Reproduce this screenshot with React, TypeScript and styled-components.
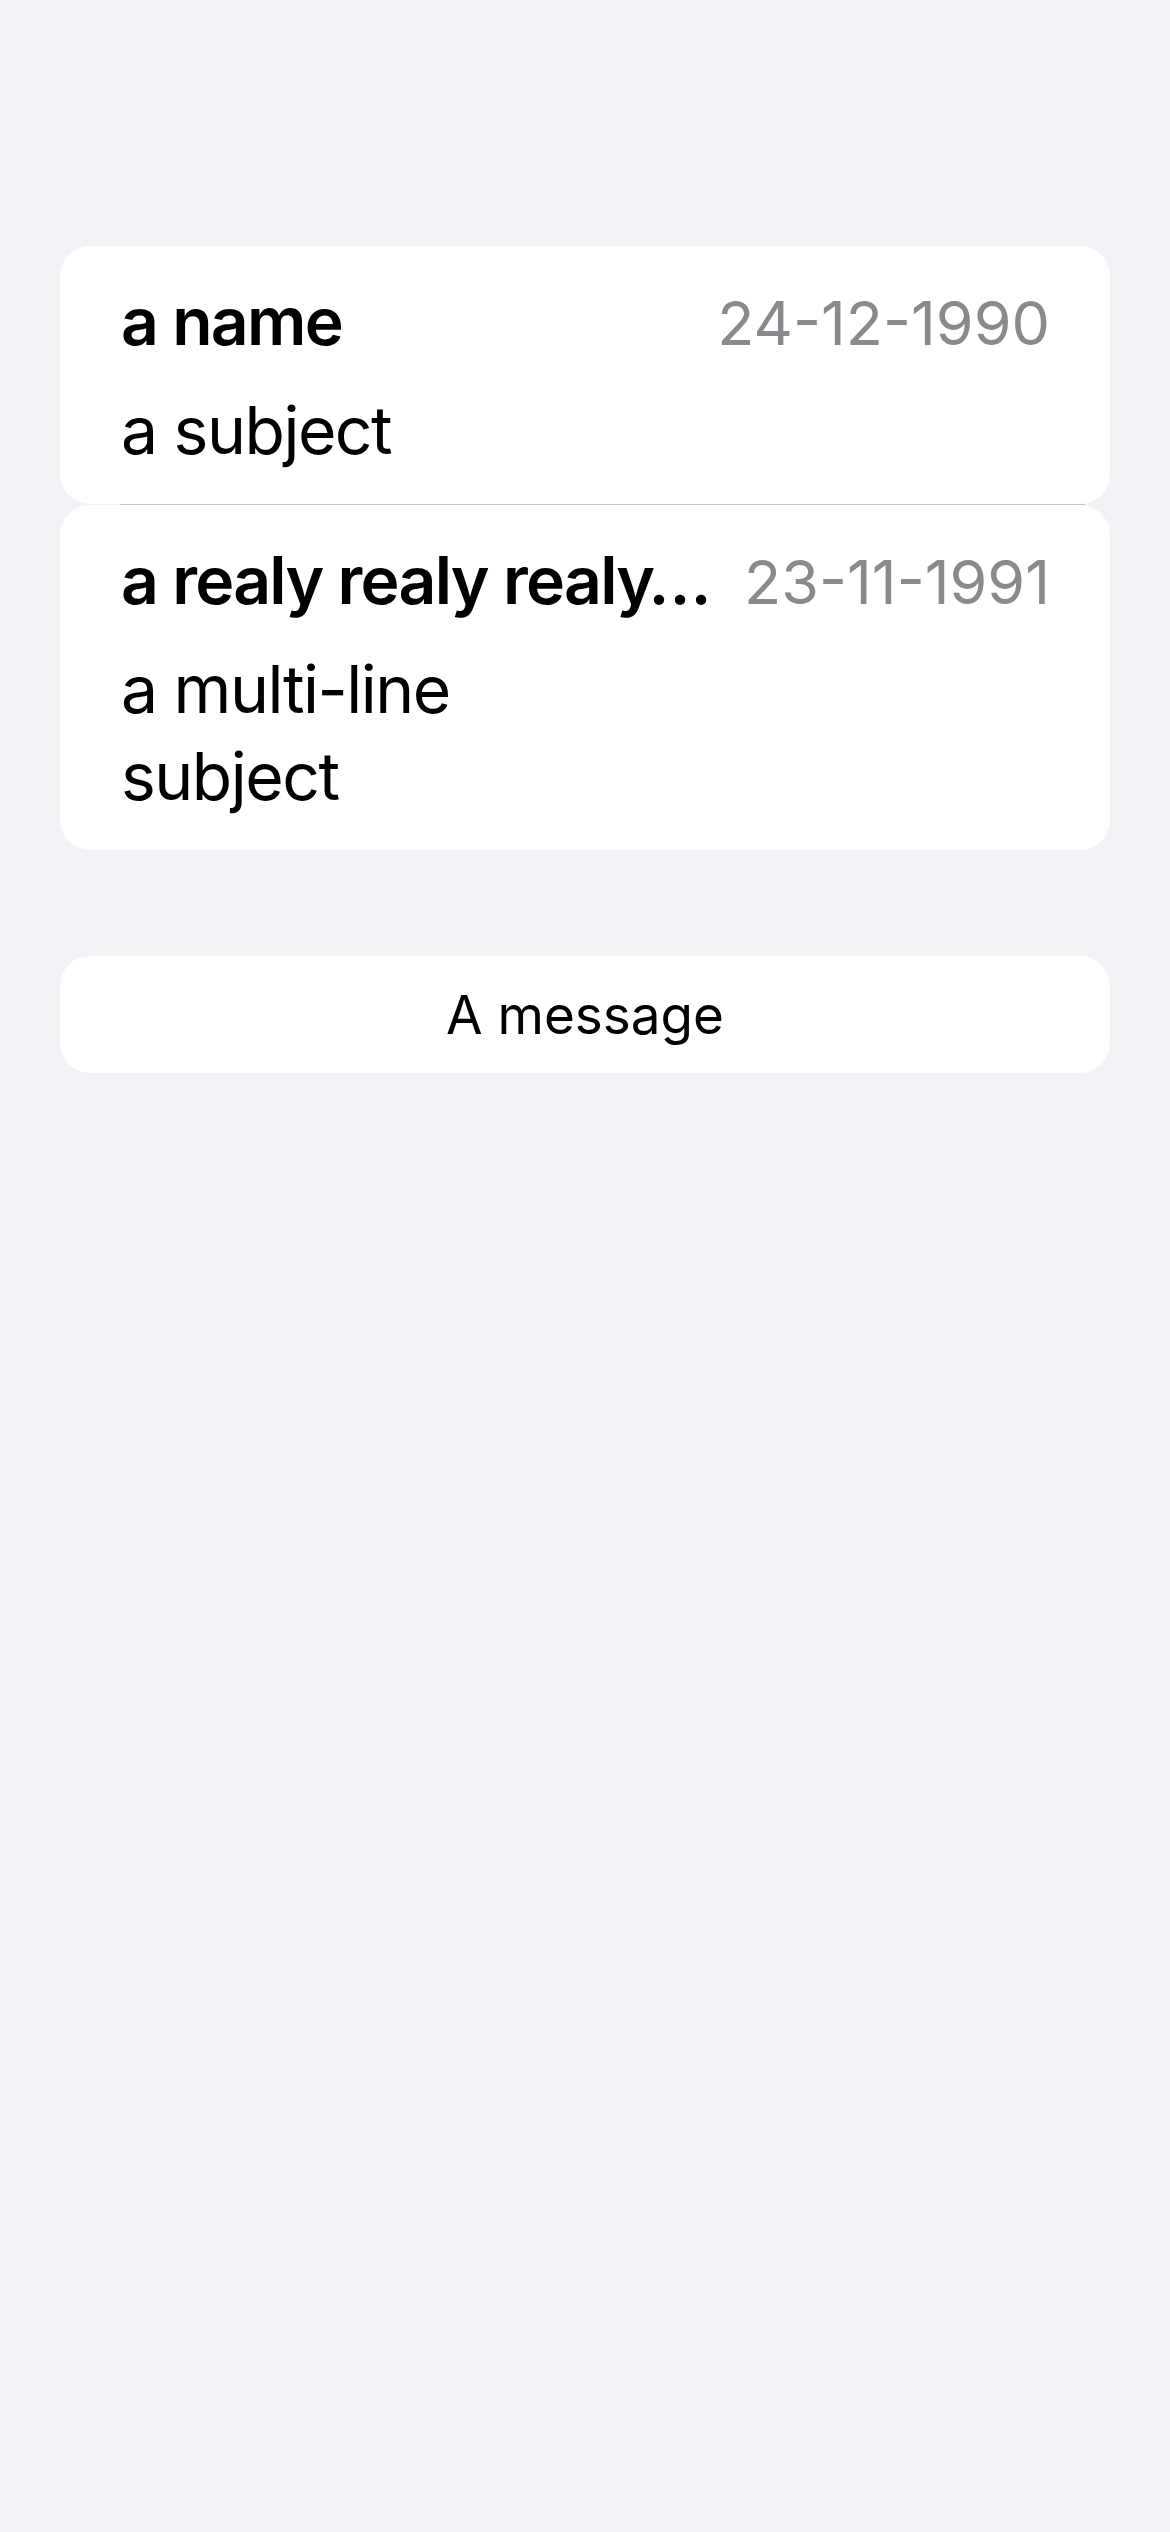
import React from "react";
import styled, { createGlobalStyle } from "styled-components";

const GlobalStyle = createGlobalStyle`
  html, body {
    margin: 0;
    padding: 0;
    background: #f2f2f7;
  }
  body {
    font-family: Inter, "Noto Sans", "Liberation Sans", sans-serif;
    color: #000;
    -webkit-font-smoothing: antialiased;
  }
`;

const Page = styled.div`
  min-height: 2532px;
  box-sizing: border-box;
  padding: 246px 60px 0 60px;
  background: #f2f2f7;
`;

const List = styled.div`
  display: flex;
  flex-direction: column;
`;

const RowCard = styled.div`
  background: #ffffff;
  border-radius: 30px;
  padding: 32px 60px 30px 61px;
  display: flex;
  flex-direction: column;
  gap: 20px;
`;

const RowHeader = styled.div`
  display: flex;
  align-items: baseline;
  justify-content: space-between;
  gap: 20px;
  line-height: 87px;
`;

const Name = styled.div`
  font-size: 66px;
  font-weight: 600;
  letter-spacing: -1.7px;
  white-space: nowrap;
  min-width: 0;
`;

const DateText = styled.div`
  font-size: 61px;
  font-weight: 400;
  color: #8a8a8e;
  white-space: nowrap;
  flex-shrink: 0;
`;

const Subject = styled.div`
  font-size: 66px;
  line-height: 87px;
  font-weight: 400;
  letter-spacing: -1.5px;
  white-space: pre-line;
`;

const Separator = styled.div`
  height: 1px;
  background: #c6c6c8;
  margin: 0 25px 0 60px;
`;

const MessageCard = styled.div`
  margin-top: 106px;
  height: 117px;
  background: #ffffff;
  border-radius: 30px;
  display: flex;
  align-items: center;
  justify-content: center;
  font-size: 53px;
`;

type Item = { name: string; date: string; subject: string };

const items: Item[] = [
  { name: "a name", date: "24-12-1990", subject: "a subject" },
  { name: "a realy realy realy…", date: "23-11-1991", subject: "a multi-line\nsubject" },
];

export default function App() {
  return (
    <>
      <GlobalStyle />
      <Page>
        <List>
          {items.map((it, i) => (
            <React.Fragment key={it.date}>
              {i > 0 && <Separator />}
              <RowCard>
                <RowHeader>
                  <Name>{it.name}</Name>
                  <DateText>{it.date}</DateText>
                </RowHeader>
                <Subject>{it.subject}</Subject>
              </RowCard>
            </React.Fragment>
          ))}
        </List>
        <MessageCard>A message</MessageCard>
      </Page>
    </>
  );
}
